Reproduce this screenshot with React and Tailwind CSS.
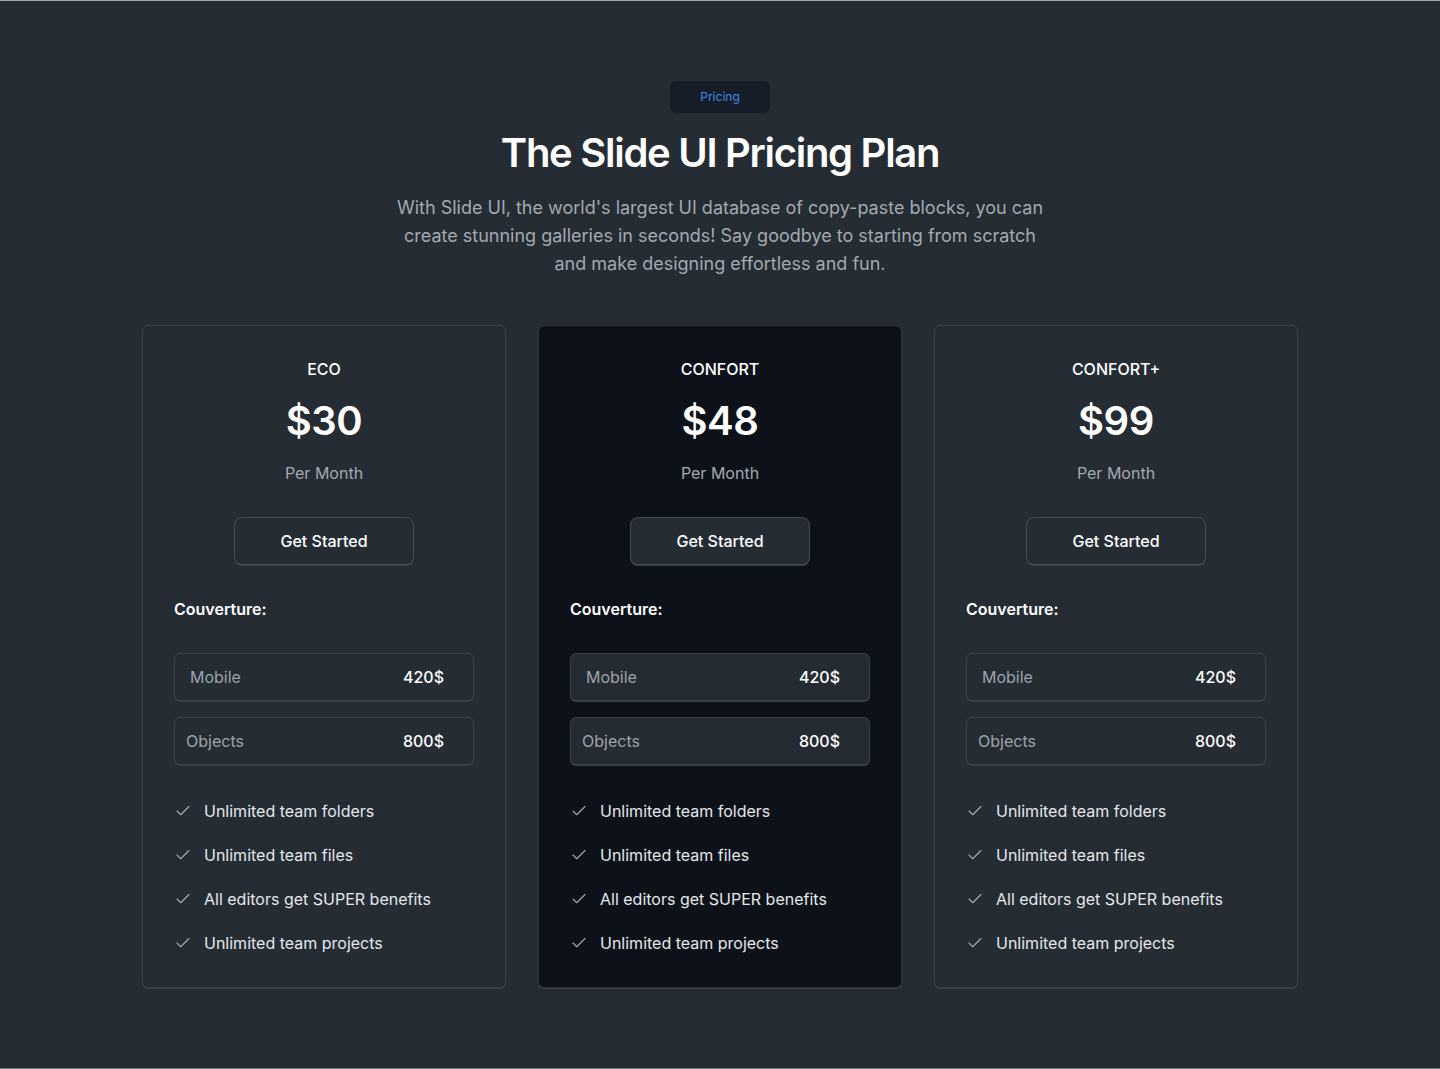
import React from "react";
import { Check } from "lucide-react";

const plans = [
  { name: "ECO", price: "$30", featured: false },
  { name: "CONFORT", price: "$48", featured: true },
  { name: "CONFORT+", price: "$99", featured: false },
];

const features = [
  "Unlimited team folders",
  "Unlimited team files",
  "All editors get SUPER benefits",
  "Unlimited team projects",
];

function Card({ plan }) {
  const f = plan.featured;
  return (
    <div
      className={
        "flex flex-col rounded-md border px-[31px] pt-[31px] pb-8 " +
        (f
          ? "bg-[#0d121a] border-[#2c343d] shadow-[0_1px_0_#3a424b]"
          : "bg-[#252c34] border-[#3a424b] shadow-[0_1px_0_#3a424b]")
      }
    >
      <div className="text-center text-base leading-6 font-medium text-white">{plan.name}</div>
      <div className="mt-5 text-center text-[40px] leading-[40px] font-semibold tracking-[-0.01em] text-white">
        {plan.price}
      </div>
      <div className="mt-5 text-center text-base leading-6 text-[#a3a9b1]">Per Month</div>
      <div className="mt-8 flex justify-center">
        <button
          className={
            "h-12 w-[180px] rounded-lg border text-base font-medium text-white shadow-[0_1px_0_#3a424b] " +
            (f ? "bg-[#252c34] border-[#434b54]" : "bg-[#252c34] border-[#454d56]")
          }
        >
          Get Started
        </button>
      </div>
      <div className="mt-8 text-base leading-6 font-semibold text-white">Couverture:</div>
      <div className="mt-8 flex flex-col gap-4">
        <div
          className={
            "flex h-12 items-center justify-between rounded-md border pl-[15px] pr-[29px] shadow-[0_1px_1px_#3a424b] " +
            (f ? "bg-[#252b33] border-[#353d46]" : "bg-[#252c34] border-[#3a424b]")
          }
        >
          <span className="text-base text-[#9ca3ab]">Mobile</span>
          <span className="text-base font-medium text-white">420$</span>
        </div>
        <div
          className={
            "flex h-12 items-center justify-between rounded-md border pl-[11px] pr-[29px] shadow-[0_1px_1px_#3a424b] " +
            (f ? "bg-[#252b33] border-[#353d46]" : "bg-[#252c34] border-[#3a424b]")
          }
        >
          <span className="text-base text-[#9ca3ab]">Objects</span>
          <span className="text-base font-medium text-white">800$</span>
        </div>
      </div>
      <ul className="mt-[34px] flex flex-col gap-5">
        {features.map((t) => (
          <li key={t} className="flex items-center gap-3 text-base leading-6 text-[#e4e7eb]">
            <Check size={18} strokeWidth={1.5} className="shrink-0 text-[#a3a9b1]" />
            <span>{t}</span>
          </li>
        ))}
      </ul>
    </div>
  );
}

export default function App() {
  return (
    <div
      className="min-h-[1069px] box-border border-t border-t-[#a3a9ae] border-b border-b-[#6e767c] bg-[#252c34] pt-[80px]"
      style={{ fontFamily: "Inter, 'Noto Sans', sans-serif" }}
    >
      <div className="flex flex-col items-center">
        <div className="flex h-8 w-[100px] items-center justify-center rounded-md bg-[#161d28] text-xs text-[#3f8ae8]">
          Pricing
        </div>
        <h1 className="mt-4 text-[40px] leading-[48px] font-semibold tracking-[-0.032em] text-white">
          The Slide UI Pricing Plan
        </h1>
        <p className="mt-[17px] max-w-[660px] text-center text-lg leading-7 text-[#a3a9b1]">
          With Slide UI, the world's largest UI database of copy-paste blocks, you can create stunning
          galleries in seconds! Say goodbye to starting from scratch and make designing effortless and fun.
        </p>
      </div>
      <div className="mx-auto mt-[47px] grid w-[1156px] grid-cols-3 gap-8">
        {plans.map((p) => (
          <Card key={p.name} plan={p} />
        ))}
      </div>
    </div>
  );
}
